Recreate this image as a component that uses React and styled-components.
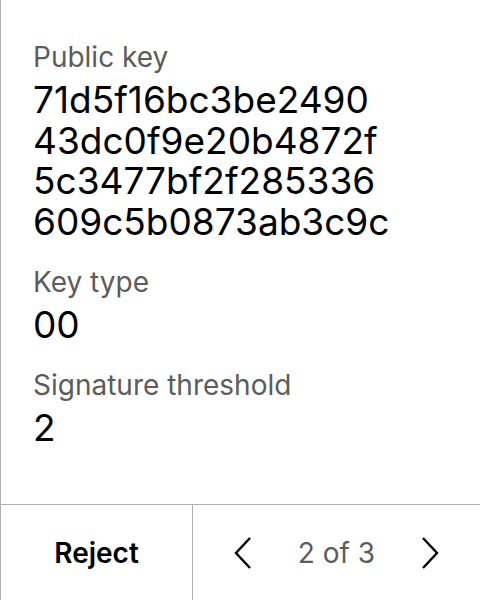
import React from "react";
import styled, { createGlobalStyle } from "styled-components";

const GlobalStyle = createGlobalStyle`
  html, body {
    margin: 0;
    padding: 0;
    background: #ffffff;
  }
  body {
    font-family: Inter, "Noto Sans", sans-serif;
  }
`;

const fields = [
  {
    label: "Public key",
    lines: ["71d5f16bc3be2490", "43dc0f9e20b4872f", "5c3477bf2f285336", "609c5b0873ab3c9c"],
  },
  { label: "Key type", lines: ["00"] },
  { label: "Signature threshold", lines: ["2"] },
];

const ChevronIcon = ({ dir }) => (
  <svg width="18" height="32" viewBox="0 0 18 32" fill="none">
    <path
      d={dir === "left" ? "M16 1L2 16L16 31" : "M2 1L16 16L2 31"}
      stroke="#000"
      strokeWidth="2.4"
    />
  </svg>
);

const App = () => {
  return (
    <>
      <GlobalStyle />
      <Screen>
        <Content>
          {fields.map((field) => (
            <Field key={field.label}>
              <Label>{field.label}</Label>
              <Value>
                {field.lines.map((line) => (
                  <div key={line}>{line}</div>
                ))}
              </Value>
            </Field>
          ))}
        </Content>
        <Footer>
          <RejectButton>Reject</RejectButton>
          <Pager>
            <NavButton aria-label="Previous">
              <ChevronIcon dir="left" />
            </NavButton>
            <PageCount>2 of 3</PageCount>
            <NavButton aria-label="Next">
              <ChevronIcon dir="right" />
            </NavButton>
          </Pager>
        </Footer>
      </Screen>
    </>
  );
};

export default App;

const Screen = styled.div`
  width: 480px;
  height: 600px;
  box-sizing: border-box;
  border-left: 1px solid #b0b0b0;
  display: flex;
  flex-direction: column;
`;

const Content = styled.div`
  flex: 1;
  padding: 40px 0 0 32px;
  display: flex;
  flex-direction: column;
  gap: 22px;
`;

const Field = styled.div`
  display: flex;
  flex-direction: column;
  gap: 6px;
`;

const Label = styled.div`
  font-size: 28px;
  line-height: 34px;
  color: #5c5c5c;
`;

const Value = styled.div`
  font-size: 37px;
  line-height: 40.7px;
  color: #000;
`;

const Footer = styled.div`
  height: 96px;
  box-sizing: border-box;
  border-top: 1px solid #b0b0b0;
  display: grid;
  grid-template-columns: 192px 1fr;
`;

const RejectButton = styled.button`
  border: none;
  border-right: 1px solid #b0b0b0;
  background: none;
  font-family: Inter, sans-serif;
  font-size: 28px;
  font-weight: 600;
  color: #000;
  padding: 0;
`;

const Pager = styled.div`
  display: flex;
  align-items: center;
  justify-content: space-between;
  padding: 0 41px 0 41px;
`;

const NavButton = styled.button`
  border: none;
  background: none;
  padding: 0;
  display: flex;
`;

const PageCount = styled.span`
  font-size: 28px;
  color: #5c5c5c;
`;
